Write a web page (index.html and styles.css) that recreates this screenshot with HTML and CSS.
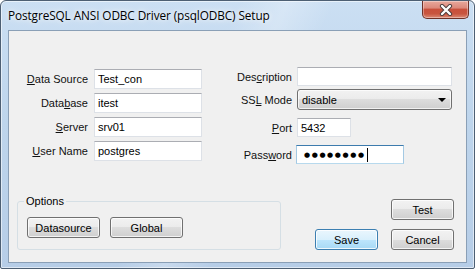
FILE: index.html
```html
<!DOCTYPE html>
<html lang="en">
<head>
  <meta charset="UTF-8" />
  <title>PostgreSQL ANSI ODBC Driver (psqlODBC) Setup</title>
  <link rel="stylesheet" href="styles.css">
</head>
<body>
  <div class="window">
    <div class="titlebar">
      <span class="title">PostgreSQL ANSI ODBC Driver (psqlODBC) Setup</span>
      <div class="close">
        <svg width="14" height="12" viewBox="0 0 14 12">
          <path d="M3 2 L11 10 M11 2 L3 10" stroke="#4b3b3b" stroke-width="4.2" stroke-linecap="round" fill="none"/>
          <path d="M3 2 L11 10 M11 2 L3 10" stroke="#ffffff" stroke-width="2.4" stroke-linecap="round" fill="none"/>
        </svg>
      </div>
    </div>

    <div class="client">
      <div class="fields">
        <div class="col col-left">
          <div class="row"><span class="lbl"><u>D</u>ata Source</span><span class="field w-left">Test_con</span></div>
          <div class="row"><span class="lbl">Data<u>b</u>ase</span><span class="field w-left">itest</span></div>
          <div class="row"><span class="lbl"><u>S</u>erver</span><span class="field w-left">srv01</span></div>
          <div class="row"><span class="lbl"><u>U</u>ser Name</span><span class="field w-left">postgres</span></div>
        </div>
        <div class="col col-right">
          <div class="row r-desc"><span class="lbl">Des<u>c</u>ription</span><span class="field w-desc"></span></div>
          <div class="row r-ssl"><span class="lbl">SS<u>L</u> Mode</span>
            <span class="combo">disable<span class="arrow"></span></span>
          </div>
          <div class="row r-port"><span class="lbl"><u>P</u>ort</span><span class="field w-port">5432</span></div>
          <div class="row r-pwd"><span class="lbl">Pass<u>w</u>ord</span>
            <span class="field focus w-pwd"><span class="dots">●●●●●●●●</span><span class="caret"></span></span>
          </div>
        </div>
      </div>

      <div class="bottom">
        <fieldset class="options">
          <legend>Options</legend>
          <div class="opt-buttons">
            <button class="btn">Datasource</button>
            <button class="btn">Global</button>
          </div>
        </fieldset>
        <div class="actions">
          <button class="btn">Test</button>
          <div class="action-row">
            <button class="btn default">Save</button>
            <button class="btn">Cancel</button>
          </div>
        </div>
      </div>
    </div>
  </div>
</body>
</html>
```

FILE: styles.css
```css
body {
  margin: 0;
  background: #ffffff;
  font-family: 'Liberation Sans', Arial, sans-serif;
  font-size: 11px;
  color: #000;
}
.window {
  width: 475px;
  height: 269px;
  box-sizing: border-box;
  border: 1px solid #4d5f73;
  border-radius: 6px 6px 2px 2px;
  background:
    linear-gradient(115deg, rgba(255,255,255,0) 40%, rgba(255,255,255,0.25) 48%, rgba(255,255,255,0) 56%),
    linear-gradient(180deg, #cbdff3 0%, #bed5ec 45%, #b6cde7 100%);
  box-shadow: inset 0 0 0 1px rgba(255,255,255,0.55);
  display: flex;
  flex-direction: column;
}
.titlebar {
  height: 29px;
  display: flex;
  align-items: flex-start;
  padding-left: 7px;
  padding-right: 5px;
}
.title {
  font-family: 'Open Sans', 'Noto Sans', sans-serif;
  font-size: 11.8px;
  color: #000;
  margin-top: 6px;
  text-shadow: 0 0 8px rgba(255,255,255,0.9), 0 0 4px rgba(255,255,255,0.8);
  letter-spacing: -0.1px;
}
.close {
  margin-left: auto;
  width: 47px;
  height: 18px;
  box-sizing: border-box;
  border: 1px solid #6e3128;
  border-top: none;
  border-radius: 0 0 5px 5px;
  background: linear-gradient(180deg, #e8a89c 0%, #dc8a7c 40%, #c9503c 50%, #c8553f 75%, #dc8a76 100%);
  box-shadow: inset 0 0 0 1px rgba(255,255,255,0.35);
  display: flex;
  align-items: center;
  justify-content: center;
}
.client {
  margin: 0 7px;
  height: 233px;
  box-sizing: border-box;
  border: 1px solid #8a9fb6;
  background: #f0f0f0;
  display: flex;
  flex-direction: column;
}
.fields {
  display: flex;
  padding-top: 36px;
}
.col {
  display: flex;
  flex-direction: column;
}
.col-left {
  padding-top: 2px;
  gap: 4px;
}
.row {
  display: flex;
  align-items: center;
}
.lbl {
  text-align: right;
  white-space: nowrap;
  color: #111;
}
.col-left .lbl {
  width: 79px;
  margin-right: 6px;
}
.col-right .lbl {
  width: 90px;
  margin-right: 5px;
}
.r-ssl { margin-top: 3px; }
.r-port { margin-top: 8px; }
.r-pwd { margin-top: 8px; }
.field {
  box-sizing: border-box;
  height: 20px;
  background: #fff;
  border: 1px solid #dde1e7;
  border-top-color: #abadb3;
  padding: 0 3px;
  display: flex;
  align-items: center;
  font-size: 11px;
}
.col-right .field { height: 19px; }
.w-left { width: 108px; }
.w-desc { width: 155px; }
.w-port { width: 54px; }
.w-pwd {
  width: 108px;
  margin-left: -1px;
  padding-left: 7px;
}
.field.focus {
  border-color: #a4c9e3;
  border-top-color: #3d7bad;
  border-bottom-color: #b7d9ed;
}
.dots {
  font-family: 'DejaVu Sans', sans-serif;
  font-size: 7px;
  letter-spacing: 1.6px;
  color: #000;
}
.caret {
  width: 1px;
  height: 14px;
  background: #000;
  margin-left: 1px;
}
.combo {
  box-sizing: border-box;
  width: 155px;
  height: 21px;
  border: 1px solid #707070;
  border-radius: 3px;
  background: linear-gradient(180deg, #f2f2f2 0%, #ebebeb 50%, #dddddd 50%, #cfcfcf 100%);
  box-shadow: inset 0 0 0 1px rgba(255,255,255,0.7);
  display: flex;
  align-items: center;
  padding-left: 4px;
  font-size: 11px;
}
.arrow {
  margin-left: auto;
  margin-right: 5px;
  width: 0;
  height: 0;
  border-left: 4px solid transparent;
  border-right: 4px solid transparent;
  border-top: 4px solid #000;
}
.bottom {
  margin-top: auto;
  display: flex;
  align-items: flex-end;
  padding: 0 12px 12px 8px;
}
.options {
  margin: 0;
  width: 264px;
  box-sizing: border-box;
  border: 1px solid #d5dfe5;
  border-radius: 3px;
  padding: 0 0 11px 9px;
}
.options legend {
  margin-left: -3px;
  padding: 0 2px;
  font-size: 11px;
}
.opt-buttons {
  display: flex;
  gap: 10px;
  padding-top: 10px;
}
.actions {
  margin-left: auto;
  display: flex;
  flex-direction: column;
  align-items: flex-end;
  gap: 9px;
}
.action-row {
  display: flex;
  gap: 13px;
}
.btn {
  font-family: 'Liberation Sans', Arial, sans-serif;
  font-size: 11px;
  width: 73px;
  height: 21px;
  padding: 0;
  color: #000;
  border: 1px solid #707070;
  border-radius: 3px;
  background: linear-gradient(180deg, #f2f2f2 0%, #ebebeb 50%, #dddddd 50%, #cfcfcf 100%);
  box-shadow: inset 0 0 0 1px rgba(255,255,255,0.75);
}
.actions .btn { width: 63px; }
.btn.default {
  border-color: #3c7fb1;
  background: linear-gradient(180deg, #eaf6fd 0%, #d9f0fc 50%, #bee6fd 50%, #a7d9f5 100%);
  box-shadow: inset 0 0 0 1px rgba(255,255,255,0.8);
}
```
